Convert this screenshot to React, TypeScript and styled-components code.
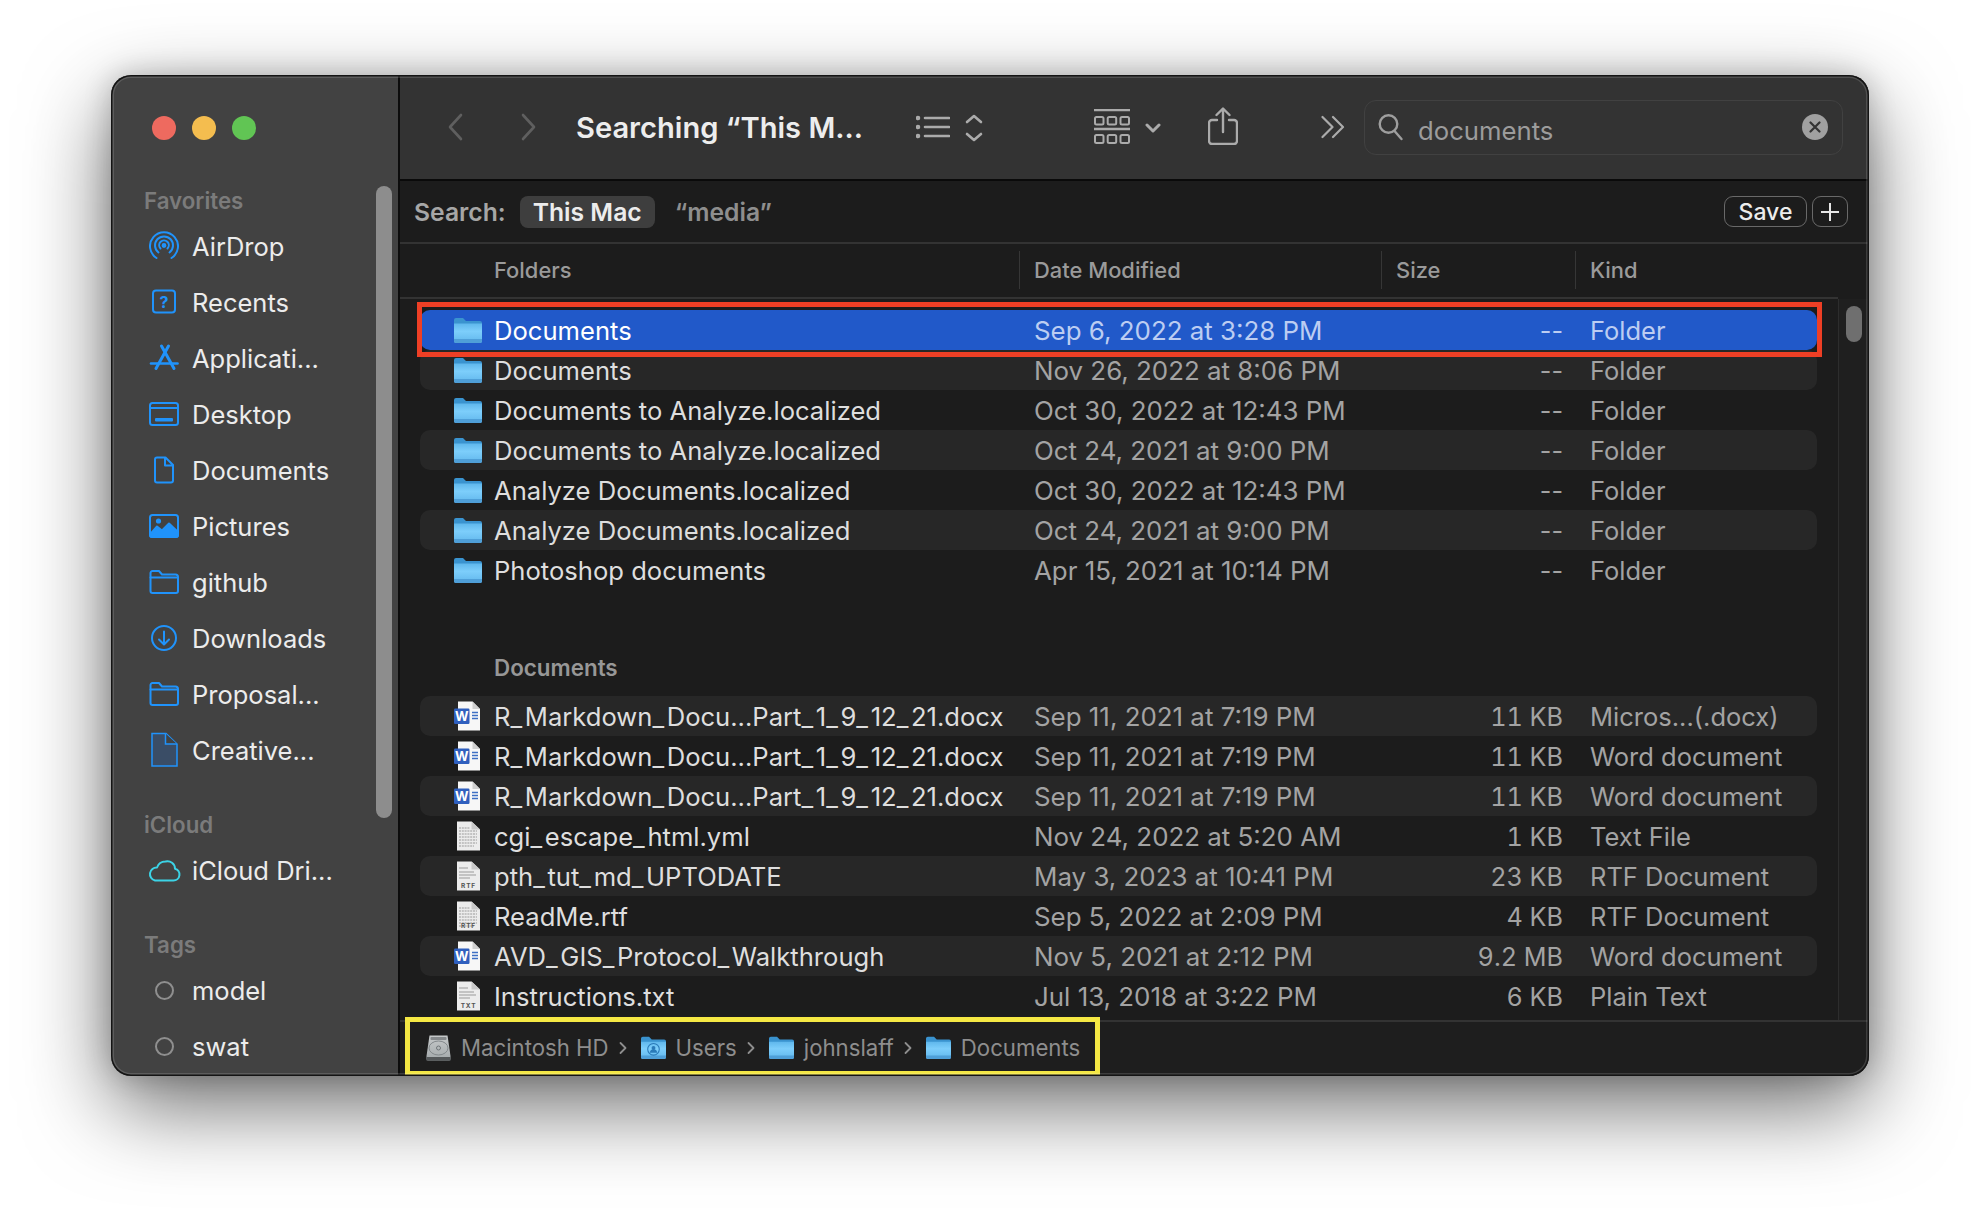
import React from 'react';
import styled, { createGlobalStyle } from 'styled-components';

const BLUE = '#2093fb';

const GlobalStyle = createGlobalStyle`
	html, body {
		margin: 0;
		padding: 0;
		background: #ffffff;
	}
	body {
		font-family: Inter, "Noto Sans", "Liberation Sans", sans-serif;
		-webkit-font-smoothing: antialiased;
	}
`;

const Page = styled.div`
	box-sizing: border-box;
	width: 1980px;
	height: 1224px;
	padding: 75px 111px 148px;
	overflow: hidden;
`;

const Window = styled.div`
	position: relative;
	display: flex;
	width: 1758px;
	height: 1001px;
	border-radius: 20px;
	overflow: hidden;
	background: #1c1c1c;
`;

const WindowShadow = styled.div`
	width: 1758px;
	height: 1001px;
	border-radius: 20px;
	box-shadow: 0 30px 85px rgba(0, 0, 0, 0.58), 0 0 28px rgba(0, 0, 0, 0.2);
`;

const WindowEdge = styled.div`
	position: absolute;
	inset: 0;
	border-radius: 20px;
	box-shadow: inset 0 0 0 1.5px #141414, inset 0 0 0 3px rgba(255, 255, 255, 0.14);
	pointer-events: none;
	z-index: 5;
`;

const Sidebar = styled.aside`
	position: relative;
	flex: none;
	width: 287px;
	height: 100%;
	border-right: 2px solid #0c0c0c;
	background: #424242;
	overflow: hidden;
`;

const TrafficLights = styled.div`
	display: flex;
	gap: 16px;
	padding: 41px 0 0 41px;
	margin-bottom: 47px;
`;

const Light = styled.span<{ $color: string }>`
	width: 24px;
	height: 24px;
	border-radius: 50%;
	background: ${(p) => p.$color};
`;

const SidebarTitle = styled.div<{ $first?: boolean }>`
	height: 28px;
	margin: ${(p) => (p.$first ? '0' : '33px')} 0 3px 33px;
	font-size: 22.3px;
	line-height: 28px;
	font-weight: 600;
	color: #7b7b7b;
`;

const SidebarItem = styled.div`
	display: flex;
	align-items: center;
	gap: 10px;
	height: 56px;
	padding-left: 35px;
	font-size: 25.5px;
	color: #ececec;
`;

const SidebarIcon = styled.span`
	display: flex;
	align-items: center;
	justify-content: center;
	width: 36px;
	height: 36px;
	flex: none;
`;

const TagDot = styled.span`
	width: 15px;
	height: 15px;
	border: 2.5px solid #8f8f8f;
	border-radius: 50%;
`;

const SidebarThumb = styled.div`
	position: absolute;
	top: 111px;
	right: 6px;
	width: 16px;
	height: 632px;
	border-radius: 8px;
	background: #8d8d8d;
`;

const Main = styled.main`
	flex: 1;
	min-width: 0;
	display: flex;
	flex-direction: column;
`;

const Toolbar = styled.header`
	flex: none;
	box-sizing: border-box;
	display: flex;
	align-items: center;
	height: 106px;
	padding: 0 26px 0 45px;
	background: #333333;
	border-bottom: 2px solid #0a0a0a;
`;

const ToolIcon = styled.span<{ $gap: number; $drop?: number }>`
	display: flex;
	flex: none;
	margin-left: ${(p) => p.$gap}px;
	margin-top: ${(p) => p.$drop ?? 0}px;
`;

const WindowTitle = styled.div`
	flex: none;
	width: 285px;
	margin-left: 37px;
	font-size: 29.1px;
	font-weight: 600;
	white-space: nowrap;
	color: #ededed;
`;

const SearchField = styled.div`
	box-sizing: border-box;
	display: flex;
	align-items: center;
	gap: 14px;
	width: 481px;
	height: 55px;
	margin-left: 19px;
	padding: 0 14px 0 13px;
	border: 1.5px solid #414141;
	border-radius: 12px;
	font-size: 25.7px;
	color: #9c9c9c;
`;

const SearchText = styled.span`
	flex: 1;
	padding-top: 7px;
`;

const ClearButton = styled.span`
	display: flex;
	align-items: center;
	justify-content: center;
	width: 26px;
	height: 26px;
	margin-top: -1px;
	border-radius: 50%;
	background: #a0a0a0;
`;

const ScopeBar = styled.div`
	flex: none;
	box-sizing: border-box;
	display: flex;
	align-items: center;
	height: 63px;
	padding: 0 21px 0 14px;
	border-bottom: 2px solid #333333;
	font-size: 24.7px;
	font-weight: 600;
`;

const ScopeLabel = styled.span`
	color: #a6a6a6;
`;

const ScopePill = styled.span`
	display: flex;
	align-items: center;
	justify-content: center;
	width: 135px;
	height: 32px;
	margin-left: 14px;
	border-radius: 8px;
	background: #3e3e3e;
	color: #ececec;
`;

const ScopeOption = styled.span`
	margin-left: 20px;
	color: #8e8e8e;
`;

const ScopeButton = styled.span<{ $width: number; $push?: boolean }>`
	box-sizing: border-box;
	display: flex;
	align-items: center;
	justify-content: center;
	width: ${(p) => p.$width}px;
	height: 31px;
	margin-left: ${(p) => (p.$push ? 'auto' : '5px')};
	border: 1.5px solid #696969;
	border-radius: 9px;
	font-size: 23px;
	font-weight: 500;
	color: #ececec;
`;

const ColumnHeader = styled.div`
	flex: none;
	box-sizing: border-box;
	display: grid;
	grid-template-columns: 525px 362px 194px 1fr;
	align-items: center;
	height: 55px;
	width: 1438px;
	padding: 0 0 1px 94px;
	border-bottom: 2px solid #333333;
	font-size: 21.9px;
	font-weight: 500;
	color: #9a9a9a;
`;

const ColumnCell = styled.div<{ $first?: boolean }>`
	display: flex;
	align-items: center;
	height: 38px;
	padding-left: ${(p) => (p.$first ? '0' : '14px')};
	border-left: ${(p) => (p.$first ? 'none' : '1.5px solid #363636')};
`;

const ListArea = styled.div`
	flex: 1;
	min-height: 0;
	display: flex;
	overflow: hidden;
`;

const Rows = styled.div`
	flex: 1;
	min-width: 0;
	padding: 11px 21px 0 20px;
`;

const ScrollTrack = styled.div`
	flex: none;
	box-sizing: border-box;
	width: 31px;
	margin-top: -2px;
	padding: 9px 6px 0 7px;
	background: #1f1f1f;
	border-left: 1.5px solid #2d2d2d;
`;

const ScrollThumb = styled.div`
	width: 16px;
	height: 36px;
	border-radius: 8px;
	background: #6f6f6f;
`;

const Row = styled.div<{ $alt?: boolean; $selected?: boolean }>`
	position: relative;
	box-sizing: border-box;
	display: grid;
	grid-template-columns: 40px 540px 401px 128px 1fr;
	align-items: center;
	height: 40px;
	padding: 1px 0 0 34px;
	border-radius: 10px;
	font-size: 25.6px;
	white-space: nowrap;
	color: ${(p) => (p.$selected ? '#ffffff' : '#dedede')};
	background: ${(p) => (p.$selected ? '#2159c9' : p.$alt ? '#272727' : 'transparent')};
`;

const RowIcon = styled.span`
	display: flex;
	align-items: center;
	margin-top: -1px;
`;

const Underscore = styled.span`
	letter-spacing: 2.6px;
`;

const RowMeta = styled.span<{ $selected?: boolean }>`
	font-size: 25.9px;
	color: ${(p) => (p.$selected ? '#bccdf2' : '#a3a3a3')};
`;

const RowSize = styled(RowMeta)<{ $tabular: boolean }>`
	font-size: 25.2px;
	font-variant-numeric: ${(p) => (p.$tabular ? 'tabular-nums' : 'normal')};
	text-align: right;
`;

const RowKind = styled(RowMeta)`
	padding-left: 27px;
	font-size: 25.5px;
`;

const SectionTitle = styled.div`
	box-sizing: border-box;
	height: 106px;
	padding: 63px 0 0 74px;
	font-size: 22.4px;
	line-height: 30px;
	font-weight: 600;
	color: #979797;
`;

const RedFrame = styled.div`
	position: absolute;
	inset: -8px -5px -7px -3px;
	z-index: 2;
	border: 5px solid #ee3f25;
	pointer-events: none;
`;

const StatusBar = styled.footer`
	position: relative;
	flex: none;
	box-sizing: border-box;
	display: flex;
	align-items: center;
	height: 56px;
	padding: 0 0 3px 26px;
	background: #1e1e1e;
	border-top: 2px solid #333333;
	font-size: 22.2px;
	color: #8e8e8e;
`;

const Crumb = styled.span`
	display: flex;
	align-items: center;
	gap: 10px;
`;

const CrumbArrow = styled.span`
	display: flex;
	margin: 0 14px 0 10px;
`;

const YellowFrame = styled.div`
	position: absolute;
	top: -5px;
	left: 5px;
	bottom: 0;
	width: 695px;
	box-sizing: border-box;
	border: 5px solid #f5e844;
	pointer-events: none;
`;

const Glyph = ({ children, w = 30, h = 30 }: { children: React.ReactNode; w?: number; h?: number }): JSX.Element => (
	<svg width={w} height={h} viewBox={`0 0 ${w} ${h}`} fill="none" stroke={BLUE} strokeWidth="2" strokeLinecap="round" strokeLinejoin="round">
		{children}
	</svg>
);

const AirDropIcon = () => (
	<Glyph>
		<path d="M7.5 27 A14 14 0 1 1 22.5 27" />
		<path d="M9.5 21.5 A9 9 0 1 1 20.5 21.5" />
		<path d="M11.5 17.5 A4.8 4.8 0 1 1 18.5 17.5" />
		<circle cx="15" cy="14.5" r="1.4" fill={BLUE} />
	</Glyph>
);

const RecentsIcon = () => (
	<Glyph>
		<rect x="4" y="3.5" width="22" height="22" rx="3" />
		<text x="15" y="20.5" textAnchor="middle" fontSize="16" fontWeight="700" fill={BLUE} stroke="none" fontFamily="Inter, sans-serif">?</text>
	</Glyph>
);

const AppsIcon = () => (
	<Glyph>
		<path d="M2 20.5H28.5" strokeWidth="2.6" />
		<path d="M12.5 3L25 25.5" strokeWidth="3" />
		<path d="M19.5 3L7 25.5" strokeWidth="3" />
	</Glyph>
);

const DesktopIcon = () => (
	<Glyph>
		<rect x="1" y="4" width="28" height="22" rx="2.5" />
		<path d="M1 9H29" />
		<rect x="6" y="19" width="18" height="3.5" rx="1" fill={BLUE} stroke="none" />
	</Glyph>
);

const DocumentIcon = () => (
	<Glyph>
		<path d="M6 4.5a2 2 0 0 1 2-2h8.5l7.5 7.5v15.5a2 2 0 0 1-2 2H8a2 2 0 0 1-2-2Z" />
		<path d="M16 3v7.5h8" />
	</Glyph>
);

const PicturesIcon = () => (
	<Glyph>
		<rect x="1" y="4" width="28" height="22" rx="2.5" />
		<path d="M1 23.5L8 15.5L13 19.5L20 12.5L29 21V24a2 2 0 0 1-2 2H3a2 2 0 0 1-2-2Z" fill={BLUE} />
		<circle cx="9.5" cy="10" r="2.6" fill={BLUE} stroke="none" />
	</Glyph>
);

const FolderLineIcon = () => (
	<Glyph>
		<path d="M1.5 7.5V6a2 2 0 0 1 2-2h6.5l3 3.5h13.5a2.5 2.5 0 0 1 2.5 2.5v14a2 2 0 0 1-2 2H3.5a2 2 0 0 1-2-2Z" />
		<path d="M1.5 10.5H29" />
	</Glyph>
);

const DownloadsIcon = () => (
	<Glyph>
		<circle cx="15" cy="15" r="12" />
		<path d="M15 8.5V21M10 16.5L15 21.5L20 16.5" />
	</Glyph>
);

const CreativeIcon = () => (
	<svg width="30" height="36" viewBox="0 0 30 36" fill="none" stroke={BLUE} strokeWidth="1.5">
		<path d="M3 1.5H17L28 12V34H3Z" fill="#3a4d66" />
		<path d="M16.5 1.5V12H28" fill="#424242" />
	</svg>
);

const CloudIcon = () => (
	<svg width="34" height="24" viewBox="0 0 34 24" fill="none" stroke="#3cd3e6" strokeWidth="2" strokeLinejoin="round">
		<path d="M8 22.5H26.5a6 6 0 0 0 1.5-11.8A7.5 7.5 0 0 0 18.5 3.5A9 9 0 0 0 10 9.5a6.6 6.6 0 0 0-2 13Z" />
	</svg>
);

const BackIcon = ({ flip }: { flip?: boolean }) => (
	<svg width="22" height="30" viewBox="0 0 22 30" fill="none" stroke="#5f5f5f" strokeWidth="2.6" strokeLinecap="round" strokeLinejoin="round">
		<path d={flip ? 'M6 3L17 15L6 27' : 'M16 3L5 15L16 27'} />
	</svg>
);

const ListIcon = () => (
	<svg width="34" height="28" viewBox="0 0 34 28" fill="none" stroke="#ababab" strokeWidth="2.6" strokeLinecap="round">
		<path d="M9 5H33M9 14H33M9 23H33" />
		<circle cx="2" cy="5" r="1" fill="#ababab" />
		<circle cx="2" cy="14" r="1" fill="#ababab" />
		<circle cx="2" cy="23" r="1" fill="#ababab" />
	</svg>
);

const UpDownIcon = () => (
	<svg width="18" height="30" viewBox="0 0 18 30" fill="none" stroke="#ababab" strokeWidth="2.6" strokeLinecap="round" strokeLinejoin="round">
		<path d="M2 9L9 3L16 9M2 21L9 27L16 21" />
	</svg>
);

const GridIcon = () => (
	<svg width="36" height="36" viewBox="0 0 36 36" fill="none" stroke="#ababab" strokeWidth="2">
		<path d="M0 1H36M0 20H36" strokeWidth="2.4" />
		<rect x="1" y="8" width="8.5" height="7.5" rx="1.5" />
		<rect x="13.7" y="8" width="8.5" height="7.5" rx="1.5" />
		<rect x="26.5" y="8" width="8.5" height="7.5" rx="1.5" />
		<rect x="1" y="26" width="8.5" height="8" rx="1.5" />
		<rect x="13.7" y="26" width="8.5" height="8" rx="1.5" />
		<rect x="26.5" y="26" width="8.5" height="8" rx="1.5" />
	</svg>
);

const ChevronDownIcon = () => (
	<svg width="16" height="12" viewBox="0 0 16 12" fill="none" stroke="#ababab" strokeWidth="3" strokeLinecap="round" strokeLinejoin="round">
		<path d="M2 3L8 9L14 3" />
	</svg>
);

const ShareIcon = () => (
	<svg width="30" height="38" viewBox="0 0 30 38" fill="none" stroke="#ababab" strokeWidth="2.4" strokeLinecap="round" strokeLinejoin="round">
		<path d="M15 25V2M8.5 8L15 1.5L21.5 8" />
		<path d="M9 13H4a3 3 0 0 0-3 3v18a3 3 0 0 0 3 3h22a3 3 0 0 0 3-3V16a3 3 0 0 0-3-3h-5" />
	</svg>
);

const MoreIcon = () => (
	<svg width="24" height="24" viewBox="0 0 24 24" fill="none" stroke="#ababab" strokeWidth="2.2" strokeLinecap="round" strokeLinejoin="round">
		<path d="M1.5 2L11.5 12L1.5 22M12 2L22 12L12 22" />
	</svg>
);

const SearchIcon = () => (
	<svg width="26" height="28" viewBox="0 0 26 28" fill="none" stroke="#9e9e9e" strokeWidth="2.4" strokeLinecap="round">
		<circle cx="10.5" cy="11" r="8.8" />
		<path d="M16.5 18L23.5 26" />
	</svg>
);

const CloseGlyph = () => (
	<svg width="12" height="12" viewBox="0 0 12 12" stroke="#333" strokeWidth="2.2" strokeLinecap="round">
		<path d="M1.5 1.5L10.5 10.5M10.5 1.5L1.5 10.5" />
	</svg>
);

const PlusGlyph = () => (
	<svg width="20" height="20" viewBox="0 0 20 20" stroke="#e6e6e6" strokeWidth="2">
		<path d="M10 1V19M1 10H19" />
	</svg>
);

const FolderIcon = ({ user, w = 28, h = 26 }: { user?: boolean; w?: number; h?: number }) => (
	<svg width={w} height={h} viewBox="0 0 28 26">
		<defs>
			<linearGradient id="folderFront" x1="0" y1="0" x2="0" y2="1">
				<stop offset="0" stopColor="#5fb7ec" />
				<stop offset="0.4" stopColor="#7dcefb" />
				<stop offset="1" stopColor="#60b6ec" />
			</linearGradient>
		</defs>
		<path d="M0 3a2 2 0 0 1 2-2h7l3 3h14a2 2 0 0 1 2 2v6H0Z" fill="#3a93cf" />
		<path d="M0 6.5h28V24a2 2 0 0 1-2 2H2a2 2 0 0 1-2-2Z" fill="url(#folderFront)" />
		<path d="M0 22h28v2a2 2 0 0 1-2 2H2a2 2 0 0 1-2-2Z" fill="#4f9fd8" />
		{user && (
			<g fill="#2a7ab8">
				<circle cx="14" cy="15" r="6.5" fill="none" stroke="#2a7ab8" strokeWidth="1.2" />
				<circle cx="14" cy="13.5" r="2.2" />
				<path d="M10 19a4 4 0 0 1 8 0Z" />
			</g>
		)}
	</svg>
);

const WordIcon = () => (
	<svg width="28" height="30" viewBox="0 0 28 30">
		<path d="M4 0.5H18.5L26 8V29.5H4Z" fill="#f7f7f7" />
		<path d="M18.5 0.5V8H26Z" fill="#cfcfcf" />
		<path d="M18 11.5H24M18 14.5H24M18 17.5H24" stroke="#3f6fc4" strokeWidth="1.3" />
		<rect x="0" y="7.5" width="15.5" height="15.5" rx="1.2" fill="#2f5fbe" />
		<text x="7.7" y="20" textAnchor="middle" fontSize="13" fontWeight="700" fill="#ffffff" fontFamily="Inter, sans-serif">W</text>
	</svg>
);

const PlainDocIcon = ({ label, dense }: { label?: string; dense?: boolean }) => (
	<svg width="28" height="30" viewBox="0 0 28 30">
		<path d="M3 0.5H17.5L26 8.5V29.5H3Z" fill="#ececec" />
		<path d="M17.5 0.5V8.5H26Z" fill="#c9c9c9" />
		<path
			d={dense ? 'M5 7H16M5 10H23M5 13H23M5 16H23M5 19H23M5 22H23M5 25H20' : 'M5 7H14M5 11H20M5 14H22M5 17H16'}
			stroke="#999999"
			strokeWidth="1.2"
			strokeDasharray={dense ? '2 0.8' : undefined}
		/>
		{label && (
			<text x="14.5" y="27" textAnchor="middle" fontSize="6.5" fontWeight="700" letterSpacing="0.8" fill="#555555" fontFamily="Inter, sans-serif">{label}</text>
		)}
	</svg>
);

const DiskIcon = () => (
	<svg width="25" height="26" viewBox="0 0 25 26">
		<defs>
			<linearGradient id="diskBody" x1="0" y1="0" x2="0" y2="1">
				<stop offset="0" stopColor="#c6c9ca" />
				<stop offset="1" stopColor="#a3a9ab" />
			</linearGradient>
		</defs>
		<path d="M3.5 0.5H21.5L24.5 21V24a1.5 1.5 0 0 1-1.5 1.5H2A1.5 1.5 0 0 1 0.5 24V21Z" fill="url(#diskBody)" />
		<rect x="4.5" y="2" width="16" height="3" rx="1" fill="#85898b" />
		<ellipse cx="12.5" cy="13" rx="9.5" ry="7" fill="none" stroke="#82888b" strokeWidth="1" />
		<circle cx="12.5" cy="13" r="2" fill="none" stroke="#6f7578" strokeWidth="1" />
		<rect x="0.5" y="22" width="24" height="3.5" fill="#54585a" />
	</svg>
);

const ArrowGlyph = () => (
	<svg width="8" height="14" viewBox="0 0 8 14" fill="none" stroke="#8e8e8e" strokeWidth="1.8" strokeLinecap="round" strokeLinejoin="round">
		<path d="M1.5 2L6.5 7L1.5 12" />
	</svg>
);

const favorites: Array<[string, JSX.Element]> = [
	['AirDrop', <AirDropIcon />],
	['Recents', <RecentsIcon />],
	['Applicati...', <AppsIcon />],
	['Desktop', <DesktopIcon />],
	['Documents', <DocumentIcon />],
	['Pictures', <PicturesIcon />],
	['github', <FolderLineIcon />],
	['Downloads', <DownloadsIcon />],
	['Proposal...', <FolderLineIcon />],
	['Creative...', <CreativeIcon />],
];

interface FileRow {
	name: string;
	date: string;
	size: string;
	kind: string;
	icon: JSX.Element;
}

const folder = <FolderIcon />;

const folderRows: FileRow[] = [
	{ name: 'Documents', date: 'Sep 6, 2022 at 3:28 PM', size: '--', kind: 'Folder', icon: folder },
	{ name: 'Documents', date: 'Nov 26, 2022 at 8:06 PM', size: '--', kind: 'Folder', icon: folder },
	{ name: 'Documents to Analyze.localized', date: 'Oct 30, 2022 at 12:43 PM', size: '--', kind: 'Folder', icon: folder },
	{ name: 'Documents to Analyze.localized', date: 'Oct 24, 2021 at 9:00 PM', size: '--', kind: 'Folder', icon: folder },
	{ name: 'Analyze Documents.localized', date: 'Oct 30, 2022 at 12:43 PM', size: '--', kind: 'Folder', icon: folder },
	{ name: 'Analyze Documents.localized', date: 'Oct 24, 2021 at 9:00 PM', size: '--', kind: 'Folder', icon: folder },
	{ name: 'Photoshop documents', date: 'Apr 15, 2021 at 10:14 PM', size: '--', kind: 'Folder', icon: folder },
];

const docRows: FileRow[] = [
	{ name: 'R_Markdown_Docu...Part_1_9_12_21.docx', date: 'Sep 11, 2021 at 7:19 PM', size: '11 KB', kind: 'Micros...(.docx)', icon: <WordIcon /> },
	{ name: 'R_Markdown_Docu...Part_1_9_12_21.docx', date: 'Sep 11, 2021 at 7:19 PM', size: '11 KB', kind: 'Word document', icon: <WordIcon /> },
	{ name: 'R_Markdown_Docu...Part_1_9_12_21.docx', date: 'Sep 11, 2021 at 7:19 PM', size: '11 KB', kind: 'Word document', icon: <WordIcon /> },
	{ name: 'cgi_escape_html.yml', date: 'Nov 24, 2022 at 5:20 AM', size: '1 KB', kind: 'Text File', icon: <PlainDocIcon dense /> },
	{ name: 'pth_tut_md_UPTODATE', date: 'May 3, 2023 at 10:41 PM', size: '23 KB', kind: 'RTF Document', icon: <PlainDocIcon label="RTF" /> },
	{ name: 'ReadMe.rtf', date: 'Sep 5, 2022 at 2:09 PM', size: '4 KB', kind: 'RTF Document', icon: <PlainDocIcon label="RTF" dense /> },
	{ name: 'AVD_GIS_Protocol_Walkthrough', date: 'Nov 5, 2021 at 2:12 PM', size: '9.2 MB', kind: 'Word document', icon: <WordIcon /> },
	{ name: 'Instructions.txt', date: 'Jul 13, 2018 at 3:22 PM', size: '6 KB', kind: 'Plain Text', icon: <PlainDocIcon label="TXT" /> },
];

// SF's underscore is wider than Inter's, so it gets some extra room
const FileName = ({ name }: { name: string }) => (
	<span>
		{name.split(/(_)/).map((part, i) => (part === '_' ? <Underscore key={i}>_</Underscore> : part))}
	</span>
);

const FileListRow = ({ row, alt, selected }: { row: FileRow; alt?: boolean; selected?: boolean }) => (
	<Row $alt={alt} $selected={selected}>
		<RowIcon>{row.icon}</RowIcon>
		<FileName name={row.name} />
		<RowMeta $selected={selected}>{row.date}</RowMeta>
		<RowSize $selected={selected} $tabular={row.size !== '--'}>{row.size}</RowSize>
		<RowKind $selected={selected}>{row.kind}</RowKind>
		{selected && <RedFrame />}
	</Row>
);

const App = (): JSX.Element => {
	return (
		<Page>
			<GlobalStyle />
			<WindowShadow>
				<Window>
					<Sidebar>
						<TrafficLights>
							<Light $color="#ee6a5f" />
							<Light $color="#f4bd4f" />
							<Light $color="#61c554" />
						</TrafficLights>
						<SidebarTitle $first>Favorites</SidebarTitle>
						{favorites.map(([label, icon]) => (
							<SidebarItem key={label}>
								<SidebarIcon>{icon}</SidebarIcon>
								{label}
							</SidebarItem>
						))}
						<SidebarTitle>iCloud</SidebarTitle>
						<SidebarItem>
							<SidebarIcon><CloudIcon /></SidebarIcon>
							iCloud Dri...
						</SidebarItem>
						<SidebarTitle>Tags</SidebarTitle>
						<SidebarItem>
							<SidebarIcon><TagDot /></SidebarIcon>
							model
						</SidebarItem>
						<SidebarItem>
							<SidebarIcon><TagDot /></SidebarIcon>
							swat
						</SidebarItem>
						<SidebarThumb />
					</Sidebar>
					<Main>
						<Toolbar>
							<ToolIcon $gap={0}><BackIcon /></ToolIcon>
							<ToolIcon $gap={50}><BackIcon flip /></ToolIcon>
							<WindowTitle>Searching “This M...</WindowTitle>
							<ToolIcon $gap={55}><ListIcon /></ToolIcon>
							<ToolIcon $gap={15} $drop={2}><UpDownIcon /></ToolIcon>
							<ToolIcon $gap={111}><GridIcon /></ToolIcon>
							<ToolIcon $gap={15} $drop={2}><ChevronDownIcon /></ToolIcon>
							<ToolIcon $gap={47} $drop={-2}><ShareIcon /></ToolIcon>
							<ToolIcon $gap={83}><MoreIcon /></ToolIcon>
							<SearchField>
								<SearchIcon />
								<SearchText>documents</SearchText>
								<ClearButton><CloseGlyph /></ClearButton>
							</SearchField>
						</Toolbar>
						<ScopeBar>
							<ScopeLabel>Search:</ScopeLabel>
							<ScopePill>This Mac</ScopePill>
							<ScopeOption>“media”</ScopeOption>
							<ScopeButton $width={83} $push>Save</ScopeButton>
							<ScopeButton $width={36}><PlusGlyph /></ScopeButton>
						</ScopeBar>
						<ColumnHeader>
							<ColumnCell $first>Folders</ColumnCell>
							<ColumnCell>Date Modified</ColumnCell>
							<ColumnCell>Size</ColumnCell>
							<ColumnCell>Kind</ColumnCell>
						</ColumnHeader>
						<ListArea>
							<Rows>
								{folderRows.map((row, i) => (
									<FileListRow key={i} row={row} selected={i === 0} alt={i % 2 === 1} />
								))}
								<SectionTitle>Documents</SectionTitle>
								{docRows.map((row, i) => (
									<FileListRow key={i} row={row} alt={i % 2 === 0} />
								))}
							</Rows>
							<ScrollTrack>
								<ScrollThumb />
							</ScrollTrack>
						</ListArea>
						<StatusBar>
							<Crumb><DiskIcon />Macintosh HD</Crumb>
							<CrumbArrow><ArrowGlyph /></CrumbArrow>
							<Crumb><FolderIcon user w={25} h={25} />Users</Crumb>
							<CrumbArrow><ArrowGlyph /></CrumbArrow>
							<Crumb><FolderIcon w={25} h={25} />johnslaff</Crumb>
							<CrumbArrow><ArrowGlyph /></CrumbArrow>
							<Crumb><FolderIcon w={25} h={25} />Documents</Crumb>
							<YellowFrame />
						</StatusBar>
					</Main>
					<WindowEdge />
				</Window>
			</WindowShadow>
		</Page>
	);
};

export default App;
